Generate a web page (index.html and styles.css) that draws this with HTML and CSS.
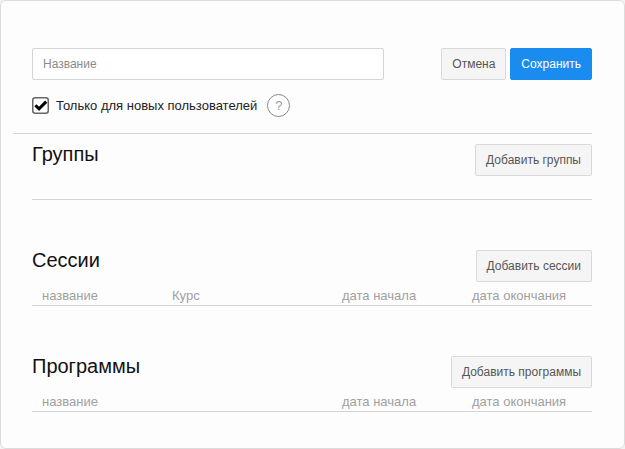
FILE: index.html
```html
<!DOCTYPE html>
<html lang="ru">
<head>
<meta charset="utf-8">
<title>Форма</title>
<link rel="stylesheet" href="styles.css">
</head>
<body>
<main class="card">
  <div class="top-row">
    <input class="name-input" type="text" placeholder="Название">
    <div class="actions">
      <button class="btn" type="button">Отмена</button>
      <button class="btn btn-primary" type="button">Сохранить</button>
    </div>
  </div>
  <div class="check-row">
    <svg class="check" width="17" height="17" viewBox="0 0 17 17" aria-hidden="true">
      <rect x="0.75" y="0.75" width="15.5" height="15.5" rx="2.5" fill="#fff" stroke="#666" stroke-width="1.5"/>
      <path d="M3.4 8.2 L7 11.8 L14.2 4.6" fill="none" stroke="#000" stroke-width="3"/>
    </svg>
    <span class="check-label">Только для новых пользователей</span>
    <span class="help">?</span>
  </div>
  <hr class="rule rule-wide">
  <section class="section section-groups">
    <div class="section-head">
      <h2 class="title">Группы</h2>
      <button class="btn" type="button">Добавить группы</button>
    </div>
  </section>
  <hr class="rule">
  <section class="section section-sessions">
    <div class="section-head">
      <h2 class="title">Сессии</h2>
      <button class="btn" type="button">Добавить сессии</button>
    </div>
    <div class="table-head">
      <span>название</span><span>Курс</span><span>дата начала</span><span>дата окончания</span>
    </div>
  </section>
  <section class="section section-programs">
    <div class="section-head">
      <h2 class="title">Программы</h2>
      <button class="btn" type="button">Добавить программы</button>
    </div>
    <div class="table-head">
      <span>название</span><span></span><span>дата начала</span><span>дата окончания</span>
    </div>
  </section>
</main>
</body>
</html>
```
FILE: styles.css
```css
* { box-sizing: border-box; }
html, body { margin: 0; padding: 0; }
body {
  width: 625px;
  height: 449px;
  overflow: hidden;
  background: #f4f4f4;
  font-family: "Liberation Sans", Arial, sans-serif;
}
.card {
  width: 625px;
  height: 449px;
  padding: 47px 32px 0 31px;
  background: #fdfdfd;
  border: 1px solid #dcdcdc;
  border-radius: 6px;
}
.top-row {
  display: flex;
  justify-content: space-between;
  height: 32px;
}
.name-input {
  width: 352px;
  height: 32px;
  padding: 0 10px;
  border: 1px solid #d4d4d4;
  border-radius: 2px;
  background: #fff;
  font: 12px "Liberation Sans", Arial, sans-serif;
  outline: none;
}
.name-input::placeholder { color: #8a8a8a; opacity: 1; }
.actions { display: flex; gap: 4px; }
.btn {
  height: 32px;
  padding: 0 10px;
  border: 1px solid #d9d9d9;
  border-radius: 2px;
  background: #f5f5f5;
  color: #555;
  font: 12px "Liberation Sans", Arial, sans-serif;
  white-space: nowrap;
}
.btn-primary {
  border-color: #1a8cf0;
  background: #1a8cf0;
  color: #fff;
}
.check-row {
  display: flex;
  align-items: center;
  height: 23px;
  margin-top: 14px;
}
.check { flex: none; }
.check-label {
  margin-left: 7px;
  color: #222;
  font-size: 13px;
}
.help {
  display: flex;
  align-items: center;
  justify-content: center;
  width: 23px;
  height: 23px;
  margin-left: 10px;
  border: 1px solid #888;
  border-radius: 50%;
  background: #fff;
  color: #999;
  font-size: 13px;
}
.rule {
  height: 1px;
  margin: 0;
  border: 0;
  background: #d6d6d6;
}
.rule-wide { margin: 16px 0 0 -19px; }
.section-groups { padding-top: 10px; height: 65px; }
.section-sessions { margin-top: 50px; }
.section-programs { margin-top: 50px; }
.section-head {
  display: flex;
  justify-content: space-between;
  align-items: flex-start;
  height: 32px;
}
.title {
  margin: -1px 0 0;
  color: #111;
  font-size: 20px;
  font-weight: 400;
  line-height: 22px;
}
.table-head {
  display: grid;
  grid-template-columns: 130px 170px 130px 1fr;
  height: 24px;
  padding: 6px 0 0 10px;
  border-bottom: 1px solid #d6d6d6;
  color: #a0a0a0;
  font-size: 13px;
  line-height: 15px;
}
```
